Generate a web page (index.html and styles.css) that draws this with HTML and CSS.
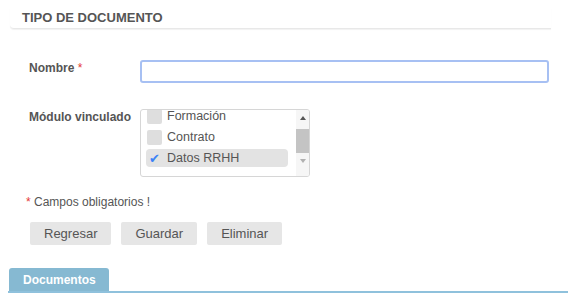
FILE: index.html
```html
<!DOCTYPE html>
<html lang="es">
<head>
    <meta charset="UTF-8">
    <title>Tipo de documento</title>
    <link rel="stylesheet" href="styles.css">
</head>
<body>
    <div class="panel">
        <h3 class="panel-title">TIPO DE DOCUMENTO</h3>

        <form class="doc-form">
            <div class="form-row">
                <label for="nombre">Nombre <span class="req">*</span></label>
                <input type="text" id="nombre" class="text-input">
            </div>

            <div class="form-row modulo-row">
                <label>Módulo vinculado</label>
                <div class="listbox">
                    <ul class="list-items">
                        <li><span class="check"></span>Formación</li>
                        <li><span class="check"></span>Contrato</li>
                        <li class="selected"><span class="check checked">&#10004;</span>Datos RRHH</li>
                    </ul>
                    <div class="scrollbar">
                        <span class="arrow up"></span>
                        <span class="thumb"></span>
                        <span class="arrow down"></span>
                    </div>
                </div>
            </div>

            <p class="required-note"><span class="req">*</span> Campos obligatorios !</p>

            <div class="button-group">
                <button type="button">Regresar</button>
                <button type="button">Guardar</button>
                <button type="button">Eliminar</button>
            </div>
        </form>

        <div class="tabs">
            <span class="tab">Documentos</span>
        </div>
    </div>
</body>
</html>
```

FILE: styles.css
```css
body {
    margin: 0;
    font-family: "Liberation Sans", Arial, sans-serif;
    color: #555;
    background: #fff;
}
.panel {
    padding: 8px 6px 0 8px;
}
.panel-title {
    margin: 0 17px 0 2px;
    padding: 2px 0 3px 12px;
    font-size: 13px;
    font-weight: bold;
    color: #555;
    border-bottom: 1px solid #e8e8e8;
    border-radius: 0 0 0 4px;
    box-shadow: 0 1px 1px #f2f2f2;
}
.doc-form {
    padding: 31px 0 0 21px;
}
.form-row {
    display: flex;
    align-items: flex-start;
}
.form-row label {
    width: 111px;
    padding-top: 1px;
    font-size: 12px;
    font-weight: bold;
}
.req {
    color: #e53935;
    font-weight: normal;
}
.text-input {
    width: 409px;
    height: 23px;
    box-sizing: border-box;
    border: 2px solid #a7c0f3;
    border-radius: 3px;
    outline: none;
}
.modulo-row {
    margin-top: 26px;
}
.modulo-row label {
    padding-top: 1px;
}
.listbox {
    display: flex;
    width: 170px;
    height: 68px;
    box-sizing: border-box;
    border: 1px solid #d6d6d6;
    border-radius: 3px;
    overflow: hidden;
}
.list-items {
    flex: 1;
    list-style: none;
    margin: 0;
    padding: 0 8px 0 5px;
}
.list-items li {
    display: flex;
    align-items: center;
    height: 18px;
    margin-bottom: 3px;
    padding-left: 1px;
    font-size: 12.5px;
    border-radius: 4px;
}
.list-items li:first-child {
    margin-top: -3px;
}
.list-items li.selected {
    background: #e3e3e3;
}
.check {
    display: inline-block;
    width: 15px;
    height: 15px;
    margin-right: 5px;
    background: #dedede;
    border-radius: 2px;
    font-size: 13px;
    line-height: 15px;
    text-align: center;
}
.check.checked {
    background: none;
    color: #3b82f6;
}
.scrollbar {
    width: 13px;
    display: flex;
    flex-direction: column;
    align-items: center;
    background: #f6f6f6;
}
.arrow {
    width: 0;
    height: 0;
    border-left: 3px solid transparent;
    border-right: 3px solid transparent;
}
.arrow.up {
    margin-top: 6px;
    border-bottom: 4px solid #555;
}
.arrow.down {
    margin-top: 6px;
    border-top: 4px solid #b0b0b0;
}
.thumb {
    width: 13px;
    height: 24px;
    margin-top: 9px;
    background: #c4c4c4;
}
.required-note {
    margin: 18px 0 0 -3px;
    font-size: 12px;
}
.button-group {
    display: flex;
    gap: 10px;
    margin: 13px 0 0 1px;
}
button {
    height: 23px;
    padding: 0 14px;
    border: none;
    border-radius: 2px;
    background: #e6e6e6;
    color: #555;
    font-family: "Liberation Sans", Arial, sans-serif;
    font-size: 13px;
    cursor: pointer;
}
.tabs {
    margin: 23px 0 0 0;
    border-bottom: 2px solid #8fc1dc;
}
.tab {
    display: inline-block;
    margin-left: 1px;
    padding: 5px 13px 4px 14px;
    background: #86b9d2;
    color: #fff;
    font-size: 12px;
    font-weight: bold;
    border-radius: 3px 3px 0 0;
}
```
